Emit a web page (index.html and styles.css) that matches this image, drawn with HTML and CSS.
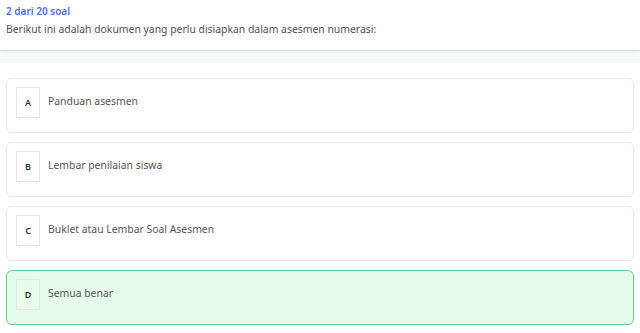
FILE: index.html
```html
<!DOCTYPE html>
<html lang="id">
<head>
  <meta charset="UTF-8" />
  <meta name="viewport" content="width=device-width, initial-scale=1.0" />
  <title>Soal Asesmen</title>
  <link rel="stylesheet" href="styles.css">
</head>
<body>

  <!-- Question header -->
  <div class="header">
    <div class="counter">2 dari 20 soal</div>
    <div class="question">Berikut ini adalah dokumen yang perlu disiapkan dalam asesmen numerasi:</div>
  </div>
  <div class="band"></div>

  <!-- Answer options -->
  <div class="options">
    <div class="option">
      <span class="letter">A</span>
      <span class="label">Panduan asesmen</span>
    </div>
    <div class="option">
      <span class="letter">B</span>
      <span class="label">Lembar penilaian siswa</span>
    </div>
    <div class="option">
      <span class="letter">C</span>
      <span class="label">Buklet atau Lembar Soal Asesmen</span>
    </div>
    <div class="option selected">
      <span class="letter">D</span>
      <span class="label">Semua benar</span>
    </div>
  </div>

</body>
</html>
```

FILE: styles.css
```css
body {
  font-family: 'Noto Sans', 'Open Sans', sans-serif;
  margin: 0;
  padding: 0;
  background: #fff;
  color: #555;
}

.header {
  height: 50px;
  padding: 4px 6px 0;
  box-sizing: border-box;
  background: #fff;
  box-shadow: 0 1px 2px rgba(0, 0, 0, 0.15);
  position: relative;
}

.counter {
  color: #4b6cf0;
  font-size: 10px;
  font-weight: 600;
  line-height: 14px;
}

.question {
  margin-top: 4px;
  font-size: 10.4px;
  line-height: 14px;
  color: #505050;
}

.band {
  height: 13px;
  background: #f7f8fa;
}

.options {
  padding: 15px 6px 0;
  display: flex;
  flex-direction: column;
  gap: 9px;
}

.option {
  height: 55px;
  box-sizing: border-box;
  border: 1px solid #e6e6e6;
  border-radius: 6px;
  padding: 8px 9px 0;
  display: flex;
  align-items: flex-start;
  gap: 8px;
  background: #fff;
}

.option.selected {
  background: #e6fbea;
  border-color: #63cf8a;
}

.letter {
  width: 24px;
  height: 31px;
  box-sizing: border-box;
  border: 1px solid #e6e6e6;
  display: flex;
  align-items: center;
  justify-content: center;
  font-size: 9px;
  font-weight: 600;
  color: #333;
  background: #fff;
}

.selected .letter {
  background: #e6fbea;
}

.label {
  font-size: 10.4px;
  line-height: 29px;
  color: #555;
}
```
